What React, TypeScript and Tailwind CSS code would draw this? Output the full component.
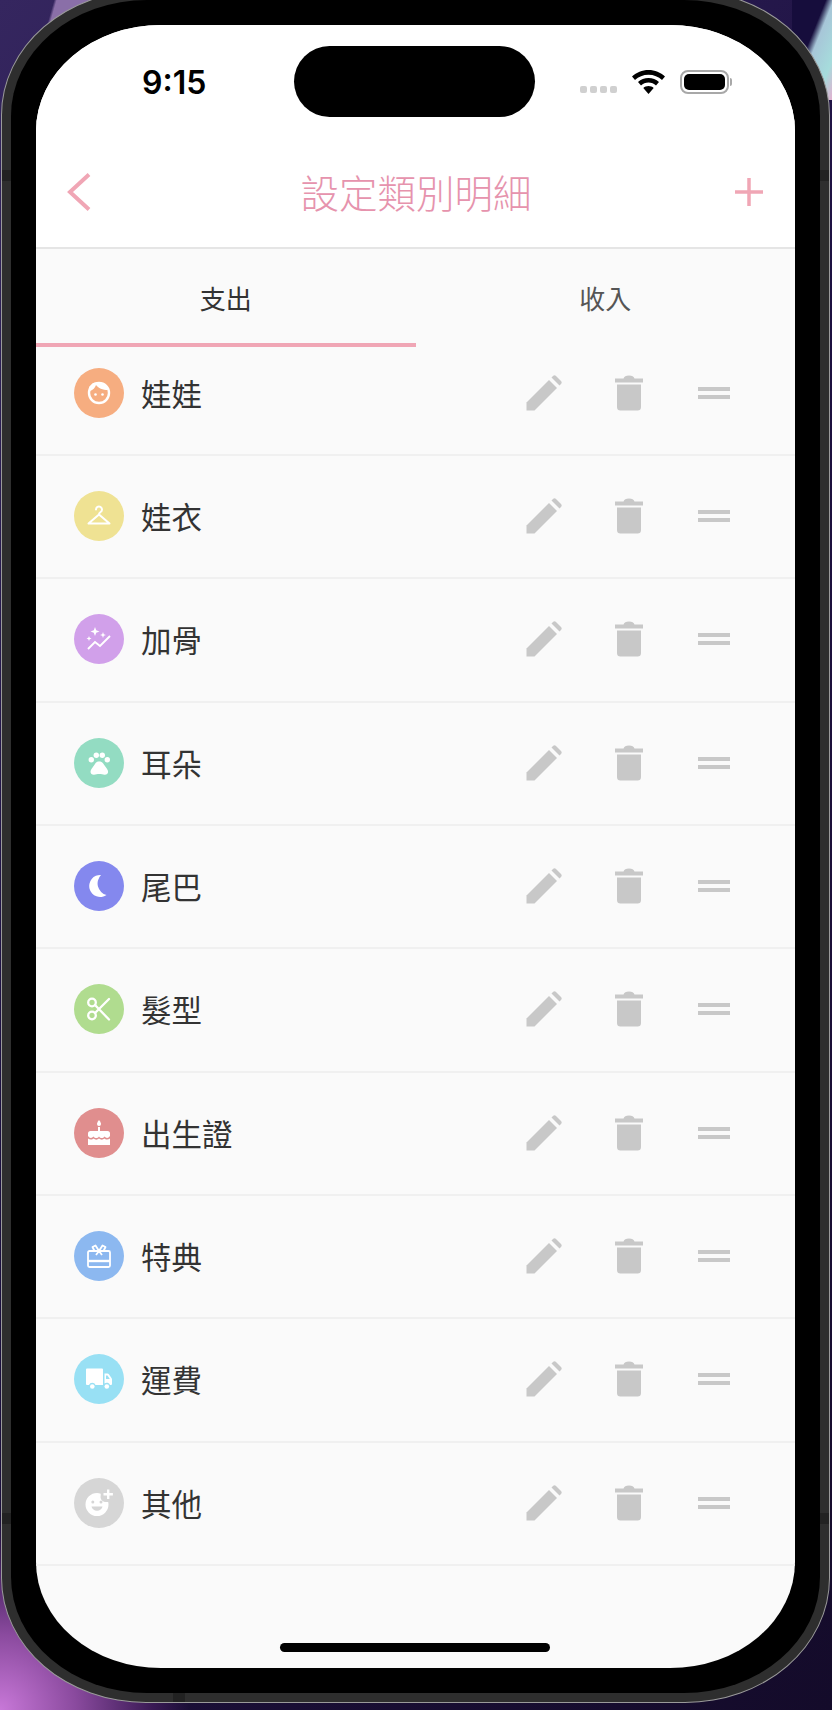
import React from "react";

const cjk = { fontFamily: '"Noto Sans CJK TC", "Noto Sans", sans-serif' };

function Face() {
  return (
    <svg width="26" height="26" viewBox="0 0 26 26" fill="none">
      <circle cx="13" cy="13" r="10" stroke="#fff" strokeWidth="2.4" />
      <path d="M4 11C7 10 9 8 10 5c2 3 7 5 12 5l-2-5-6-3-7 1-4 4z" fill="#fff" />
      <circle cx="9.500" cy="14.500" r="1.300" fill="#fff" />
      <circle cx="16.500" cy="14.500" r="1.300" fill="#fff" />
    </svg>
  );
}
function Hanger() {
  return (
    <svg width="26" height="26" viewBox="0 0 26 26" fill="none" stroke="#fff" strokeWidth="2" strokeLinecap="round" strokeLinejoin="round">
      <path d="M10 6.500a3 3 0 1 1 4.600 2.500c-1 .7-1.600 1.200-1.600 2.600" />
      <path d="M13 11.500 2.500 20.500h21z" />
    </svg>
  );
}
function Sparkle() {
  return (
    <svg width="26" height="26" viewBox="0 0 26 26" fill="none">
      <path d="M2 23l7-7 5 4 10-10" stroke="#fff" strokeWidth="1.900" />
      <path d="M9 1l1.200 3.300L13.500 5.500 10.200 6.700 9 10 7.800 6.700 4.500 5.500 7.800 4.300z" fill="#fff" />
      <path d="M17 6l.8 2.200L20 9l-2.200.8L17 12l-.8-2.200L14 9l2.200-.8z" fill="#fff" />
      <path d="M3 10l.7 1.800L5.500 12.500l-1.800.7L3 15l-.7-1.800L.5 12.500l1.800-.7z" fill="#fff" />
    </svg>
  );
}
function Paw() {
  return (
    <svg width="26" height="26" viewBox="0 0 26 26" fill="#fff">
      <circle cx="5.300" cy="9.700" r="2.700" />
      <circle cx="10.300" cy="5.300" r="2.700" />
      <circle cx="16.300" cy="5.300" r="2.700" />
      <circle cx="21.300" cy="9.700" r="2.700" />
      <path d="M13.300 11.300c-2.500 0-4 2-5.500 4.500C6.500 18 4.500 19.500 4.500 21.800c0 2 1.700 3 3.500 2.900 1.800-.1 3.300-.7 5.300-.7s3.500.6 5.300.7c1.800.1 3.500-.9 3.500-2.900 0-2.300-2-3.800-3.300-6-1.500-2.500-3.300-4.500-5.800-4.500z" />
    </svg>
  );
}
function Moon() {
  return (
    <svg width="26" height="26" viewBox="0 0 26 26" fill="#fff">
      <path d="M15 2A11 11 0 1 0 20.500 22A12 12 0 0 1 15 2z" />
    </svg>
  );
}
function Scissors() {
  return (
    <svg width="26" height="26" viewBox="0 0 26 26" fill="none" stroke="#fff" strokeWidth="2.300">
      <circle cx="6" cy="6.500" r="3.800" />
      <circle cx="6" cy="19.500" r="3.800" />
      <path d="M9 9l14 14.500M9 17 23 3" strokeLinecap="round" />
    </svg>
  );
}
function Cake() {
  return (
    <svg width="26" height="28" viewBox="0 0 26 28" fill="#fff">
      <path d="M13 1c1.500 2 2 3 2 4a2 2 0 0 1-4 0c0-1 .5-2 2-4z" />
      <rect x="12" y="8" width="2" height="4" />
      <path d="M4.500 12h17a2.500 2.500 0 0 1 2.500 2.500V17c-1.500 2.500-4 2.500-5.500.5-1.500 2-4 2-5.500 0-1.500 2-4 2-5.500 0C6 19.500 3.500 19.500 2 17v-2.500A2.500 2.500 0 0 1 4.500 12z" />
      <path d="M2 19.500c2 1.500 4.500 1.200 5.500 0 1.500 1.500 4 1.500 5.500 0 1.500 1.500 4 1.500 5.500 0 1 1.200 3.500 1.500 5.500 0V26H2z" />
    </svg>
  );
}
function Gift() {
  return (
    <svg width="26" height="26" viewBox="0 0 26 26" fill="none" stroke="#fff" strokeWidth="1.800" strokeLinejoin="round">
      <rect x="2" y="8" width="22" height="16" rx="1.500" />
      <path d="M2 18h22" strokeWidth="2.400" />
      <path d="M13 8 9.500 2.500 6.500 4 8.500 8M13 8l3.500-5.500L19.500 4l-2 4M13 8l-3 4M13 8l3 4" />
    </svg>
  );
}
function Truck() {
  return (
    <svg width="26" height="26" viewBox="0 0 26 26" fill="#fff">
      <path d="M0 3.500a1 1 0 0 1 1-1h15a1 1 0 0 1 1 1v15.500H9.500a3.500 3.500 0 0 0-6.500 0H1a1 1 0 0 1-1-1z" />
      <path d="M18.500 7.500h3c.6 0 1.100.3 1.400.7L25.500 12c.3.400.5.900.5 1.400V18a1 1 0 0 1-1 1h-1a3.500 3.500 0 0 0-5.500-1.500zM20 9.500v3.500h3.800l-2.300-3.500z" fillRule="evenodd" />
      <circle cx="6.300" cy="20.500" r="2.300" />
      <circle cx="20.800" cy="20.500" r="2.300" />
    </svg>
  );
}
function Smile() {
  return (
    <svg width="30" height="30" viewBox="0 0 30 30" fill="#fff">
      <path d="M13 5a11.500 11.500 0 1 0 11.500 11.500c0-1-.1-1.800-.3-2.600h-1.500a5 5 0 0 1-6-6.100V5.800c-1.100-.5-2.400-.8-3.700-.8z" />
      <path d="M23 1.500h2.400V5h3.500v2.400h-3.500v3.500H23V7.400h-3.500V5H23z" />
      <circle cx="8.800" cy="14" r="1.500" fill="#d6d6d6" />
      <circle cx="17" cy="14" r="1.500" fill="#d6d6d6" />
      <path d="M7.500 18.500h11c-.5 2.600-2.800 4.200-5.500 4.200s-5-1.600-5.500-4.200z" fill="#d6d6d6" />
    </svg>
  );
}

const rows: { label: string; color: string; icon: React.ReactNode }[] = [
  { label: "娃娃", color: "bg-[#f6ad80]", icon: <Face /> },
  { label: "娃衣", color: "bg-[#efe293]", icon: <Hanger /> },
  { label: "加骨", color: "bg-[#d1a0ea]", icon: <Sparkle /> },
  { label: "耳朵", color: "bg-[#93dcc2]", icon: <Paw /> },
  { label: "尾巴", color: "bg-[#8488ee]", icon: <Moon /> },
  { label: "髮型", color: "bg-[#b0dc8f]", icon: <Scissors /> },
  { label: "出生證", color: "bg-[#e08e8e]", icon: <Cake /> },
  { label: "特典", color: "bg-[#8cb8f0]", icon: <Gift /> },
  { label: "運費", color: "bg-[#98e0f4]", icon: <Truck /> },
  { label: "其他", color: "bg-[#d6d6d6]", icon: <Smile /> },
];

function Pencil() {
  return (
    <svg width="36" height="36" viewBox="0 0 36 36" fill="#c8c8c8">
      <path d="M.5 35.500V27.500L23 5l8 8L8.500 35.500z" />
      <path d="M25.500 2.500 27 1a2.200 2.200 0 0 1 3 0l5 5a2.200 2.200 0 0 1 0 3l-1.500 1.500z" />
    </svg>
  );
}
function Trash() {
  return (
    <svg width="30" height="36" viewBox="0 0 30 36" fill="#c8c8c8">
      <path d="M1 3.500h8.500C10 1.500 12 .5 15 .5s5 1 5.500 3H29v4H1z" />
      <path d="M3 9.500h24V32a3.500 3.500 0 0 1-3.500 3.500h-17A3.500 3.500 0 0 1 3 32z" />
    </svg>
  );
}

export default function App() {
  return (
    <div className="relative w-[832px] h-[1710px] overflow-hidden bg-[linear-gradient(135deg,#35265f_0%,#1c1040_45%,#1b0f38_70%,#140b2a_100%)]">
      <div className="absolute left-[40px] top-0 h-[36px] w-[60px] bg-[linear-gradient(106deg,transparent_20%,#8a6fa8_24%)]" />
      <div className="absolute right-0 top-0 h-[100px] w-[40px] bg-[linear-gradient(112deg,#160d3c_0%,#160d3c_42%,#a7c6d8_52%,#a6dcdc_80%,#e2b0d0_100%)]" />
      <div className="absolute bottom-0 left-0 h-[200px] w-[260px] bg-[radial-gradient(circle_190px_at_0%_100%,#c878d8_0%,#8a4a9e_40%,#3a1a55_80%,transparent_100%)]" />
      <div className="relative ml-px mt-[-10px] h-[1713px] w-[829px] rounded-[145px/125px] border border-[#9a9a9a] bg-[#2e2e2e] p-[9px]">
        <div className="h-full w-full rounded-[136px/116px] bg-black p-[25px]">
          <div className="relative flex h-full w-full flex-col overflow-hidden rounded-[125px/106px] bg-[#fafafa]" style={cjk}>
            {/* Status bar + header */}
            <div className="flex h-[224px] shrink-0 flex-col border-b-2 border-[#e5e5e5] bg-white">
              <div className="relative flex h-[93px] shrink-0 items-center justify-between pl-[106px] pr-[63px] pt-[21px]">
                <span className="mt-[2px] text-[32px] leading-none font-semibold text-black" style={{ fontFamily: "Inter, sans-serif" }}>9:15</span>
                <div className="absolute left-[258px] top-[21px] h-[71px] w-[241px] rounded-[36px] bg-black" />
                <div className="flex items-center">
                  <div className="mt-[15px] flex gap-[3px]">
                    <span className="h-[7px] w-[7px] rounded-[2px] bg-[#d0d0d0]" />
                    <span className="h-[7px] w-[7px] rounded-[2px] bg-[#d0d0d0]" />
                    <span className="h-[7px] w-[7px] rounded-[2px] bg-[#d0d0d0]" />
                    <span className="h-[7px] w-[7px] rounded-[2px] bg-[#d0d0d0]" />
                  </div>
                  <svg className="ml-[15px]" width="33" height="24" viewBox="0 0 33 24" fill="#000">
                    <path d="M16.500 0C10 0 4.500 2.500 0 6.500l3 3.500C6.500 6.800 11.200 4.800 16.500 4.800S26.500 6.800 30 10l3-3.500C28.500 2.500 23 0 16.500 0z" />
                    <path d="M16.500 8c-4 0-7.700 1.500-10.500 4l3 3.500c2-1.800 4.600-2.900 7.500-2.900s5.500 1.100 7.500 2.900l3-3.500c-2.800-2.500-6.500-4-10.500-4z" />
                    <path d="M16.500 16c-2 0-3.800.7-5.200 1.900l5.200 6 5.200-6C20.300 16.700 18.500 16 16.500 16z" />
                  </svg>
                  <div className="ml-[15px] flex items-center">
                    <div className="flex h-[24px] w-[49px] items-center justify-center rounded-[8px] border-2 border-[#a8a8a8] bg-white">
                      <div className="h-[16px] w-[41px] rounded-[5px] bg-black" />
                    </div>
                    <div className="ml-px h-[8px] w-[2px] rounded-r-sm bg-[#a8a8a8]" />
                  </div>
                </div>
              </div>
              <div className="flex flex-1 items-center justify-between pl-[31px] pr-[32px] pt-[19px]">
                <svg width="24" height="38" viewBox="0 0 24 38" fill="none" stroke="#f0a6b5" strokeWidth="4">
                  <path d="M22 1.500 3 19l19 17.500" />
                </svg>
                <span className="mb-[2px] ml-[6px] text-[38.500px] leading-none font-light text-[#e693ad]">設定類別明細</span>
                <svg width="28" height="28" viewBox="0 0 28 28" stroke="#f0a6b5" strokeWidth="3.500">
                  <path d="M0 14h28M14 0v28" />
                </svg>
              </div>
            </div>
            {/* Tabs */}
            <div className="flex h-[98px] shrink-0">
              <div className="flex flex-1 items-center justify-center border-b-4 border-[#f0a6b5] pt-[3px] text-[26px] text-[#333333]">支出</div>
              <div className="flex flex-1 items-center justify-center pb-1 pt-[3px] text-[26px] text-[#555555]">收入</div>
            </div>
            {/* List */}
            <div className="flex-1 overflow-hidden">
              <div className="mt-[-14.330px]">
                {rows.map((r) => (
                  <div key={r.label} className="flex h-[123.333px] items-center justify-between border-b-2 border-[#f0f0f0] pb-[1px] pl-[38px] pr-[65px]">
                    <div className="flex items-center gap-[17px]">
                      <div className={`flex h-[50px] w-[50px] items-center justify-center rounded-full ${r.color}`}>{r.icon}</div>
                      <span className="text-[30.500px] leading-none text-[#333333]">{r.label}</span>
                    </div>
                    <div className="flex items-center">
                      <Pencil />
                      <div className="ml-[52px]"><Trash /></div>
                      <div className="ml-[54px] flex w-[32px] flex-col gap-[4px]">
                        <div className="h-[4px] bg-[#c8c8c8]" />
                        <div className="h-[4px] bg-[#c8c8c8]" />
                      </div>
                    </div>
                  </div>
                ))}
              </div>
            </div>
            <div className="absolute bottom-[16px] left-[244px] h-[9px] w-[270px] rounded-full bg-black" />
          </div>
        </div>
      </div>
      {/* Antenna bands lie over the frame edge */}
      <div className="absolute left-[2px] top-[170px] h-[11px] w-[9px] bg-[#222222]" />
      <div className="absolute left-[2px] top-[1513px] h-[11px] w-[9px] bg-[#222222]" />
      <div className="absolute right-[3px] top-[170px] h-[11px] w-[9px] bg-[#222222]" />
      <div className="absolute right-[3px] top-[1513px] h-[11px] w-[9px] bg-[#222222]" />
      <div className="absolute bottom-[8px] left-[173px] h-[9px] w-[12px] bg-[#222222]" />
    </div>
  );
}
